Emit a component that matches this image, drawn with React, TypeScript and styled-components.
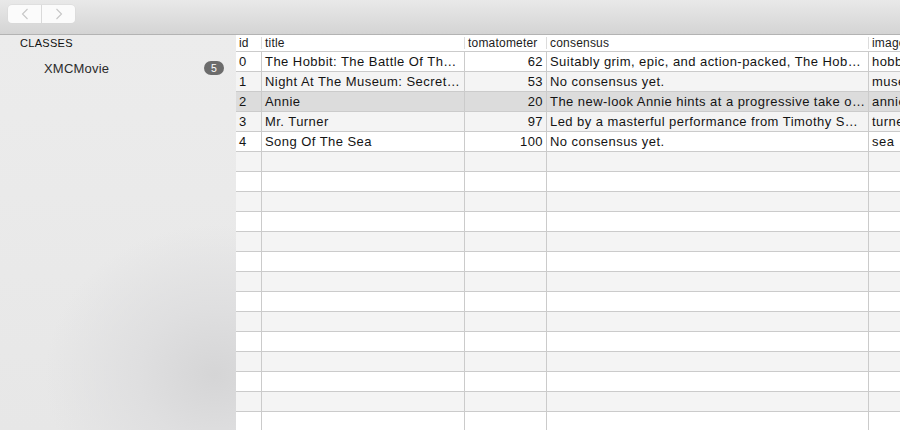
import React from "react";
import styled, { createGlobalStyle } from "styled-components";

const Global = createGlobalStyle`
  html, body { margin: 0; padding: 0; height: 430px; overflow: hidden; }
  body { font-family: "Liberation Sans", Arial, sans-serif; -webkit-font-smoothing: antialiased; }
  #root { height: 430px; }
`;

const Window = styled.div`
  display: flex;
  flex-direction: column;
  width: 900px;
  height: 430px;
  overflow: hidden;
`;

const Toolbar = styled.div`
  flex: none;
  height: 35px;
  box-sizing: border-box;
  border-bottom: 1px solid #b3b3b3;
  background: linear-gradient(#e9e9e9, #d4d4d4);
  display: flex;
  align-items: flex-start;
  padding: 5px 0 0 8px;
`;

const Segmented = styled.div`
  display: flex;
  height: 18px;
  border-radius: 4px;
  background: #fbfbfb;
  box-shadow: 0 0 0 0.5px #d8d8d8;
  overflow: hidden;
`;

const SegButton = styled.div<{ $divider?: boolean }>`
  width: 33px;
  height: 18px;
  display: flex;
  align-items: center;
  justify-content: center;
  border-right: ${(p) => (p.$divider ? "1px solid #dadada" : "none")};
`;

const Main = styled.div`
  flex: 1;
  display: flex;
  min-height: 0;
`;

const Sidebar = styled.div`
  width: 236px;
  flex: none;
  background: radial-gradient(ellipse 170px 150px at 215px 340px, #d5d5d6 0%, #dfdfe0 45%, rgba(233,233,233,0) 100%),
    linear-gradient(#ececec, #e7e7e7);
  display: flex;
  flex-direction: column;
  padding-top: 1px;
`;

const SectionTitle = styled.div`
  font-size: 11px;
  color: #111;
  padding-left: 20px;
  height: 14px;
  line-height: 14px;
  letter-spacing: 0.3px;
`;

const SidebarItem = styled.div`
  display: flex;
  align-items: center;
  justify-content: space-between;
  height: 22px;
  margin-top: 7px;
  padding: 0 12px 0 44px;
  font-size: 13px;
  letter-spacing: 0.2px;
  color: #2b2b2b;
`;

const Badge = styled.span`
  display: inline-flex;
  align-items: center;
  justify-content: center;
  width: 20px;
  height: 14px;
  border-radius: 7px;
  background: #6c6c6c;
  color: #fff;
  font-size: 10.5px;
`;

const Table = styled.div`
  flex: 1;
  background: #fff;
  display: flex;
  flex-direction: column;
  min-width: 0;
  overflow: hidden;
`;

const HeaderRow = styled.div`
  display: flex;
  height: 17px;
  flex: none;
  border-bottom: 1px solid #cbcbcb;
  box-sizing: border-box;
  background: #fff;
`;

const HeaderCell = styled.div<{ $w?: number }>`
  position: relative;
  width: ${(p) => (p.$w ? `${p.$w}px` : "auto")};
  flex: ${(p) => (p.$w ? "none" : "1")};
  box-sizing: border-box;
  font-size: 12px;
  letter-spacing: 0.2px;
  color: #1c1c1c;
  padding-left: 3px;
  line-height: 16px;
  white-space: nowrap;
  overflow: hidden;
  &::after {
    content: "";
    display: ${(p) => (p.$w ? "block" : "none")};
    position: absolute;
    right: 0;
    top: 2px;
    bottom: 2px;
    width: 1px;
    background: #dcdcdc;
  }
`;

const Row = styled.div<{ $bg: string }>`
  display: flex;
  height: 20px;
  flex: none;
  box-sizing: border-box;
  border-bottom: 1px solid #cbcbcb;
  background: ${(p) => p.$bg};
`;

const Cell = styled.div<{ $w?: number; $right?: boolean }>`
  width: ${(p) => (p.$w ? `${p.$w}px` : "auto")};
  flex: ${(p) => (p.$w ? "none" : "1")};
  box-sizing: border-box;
  border-right: ${(p) => (p.$w ? "1px solid #cbcbcb" : "none")};
  font-size: 13px;
  letter-spacing: 0.45px;
  color: #141414;
  line-height: 19px;
  padding: 0 3px;
  white-space: nowrap;
  overflow: hidden;
  text-overflow: ${(p) => (p.$w ? "ellipsis" : "clip")};
  text-align: ${(p) => (p.$right ? "right" : "left")};
`;

const cols = [
  { key: "id", w: 26 },
  { key: "title", w: 203 },
  { key: "tomatometer", w: 82, right: true },
  { key: "consensus", w: 322 },
  { key: "image" },
];

const data = [
  ["0", "The Hobbit: The Battle Of The Five Armies", "62", "Suitably grim, epic, and action-packed, The Hobbit: The Battle of the Five Armies", "hobbit"],
  ["1", "Night At The Museum: Secret Of The Tomb", "53", "No consensus yet.", "museum"],
  ["2", "Annie", "20", "The new-look Annie hints at a progressive take on the material", "annie"],
  ["3", "Mr. Turner", "97", "Led by a masterful performance from Timothy Spall", "turner"],
  ["4", "Song Of The Sea", "100", "No consensus yet.", "sea"],
];

const Chevron = ({ dir }: { dir: "l" | "r" }) => (
  <svg width="8" height="12" viewBox="0 0 8 12">
    <path
      d={dir === "l" ? "M6.5 1 L1.5 6 L6.5 11" : "M1.5 1 L6.5 6 L1.5 11"}
      fill="none"
      stroke="#c6c6c6"
      strokeWidth="1.1"
    />
  </svg>
);

export default function App() {
  const rows = Array.from({ length: 20 }, (_, i) => i);
  return (
    <Window>
      <Global />
      <Toolbar>
        <Segmented>
          <SegButton $divider>
            <Chevron dir="l" />
          </SegButton>
          <SegButton>
            <Chevron dir="r" />
          </SegButton>
        </Segmented>
      </Toolbar>
      <Main>
        <Sidebar>
          <SectionTitle>CLASSES</SectionTitle>
          <SidebarItem>
            <span>XMCMovie</span>
            <Badge>5</Badge>
          </SidebarItem>
        </Sidebar>
        <Table>
          <HeaderRow>
            {cols.map((c) => (
              <HeaderCell key={c.key} $w={c.w}>
                {c.key}
              </HeaderCell>
            ))}
          </HeaderRow>
          {rows.map((i) => {
            const d = data[i];
            const bg = i === 2 ? "#dcdcdc" : i % 2 === 1 ? "#f4f4f4" : "#ffffff";
            return (
              <Row key={i} $bg={bg}>
                {cols.map((c, j) => (
                  <Cell key={c.key} $w={c.w} $right={c.right}>
                    {d ? d[j] : ""}
                  </Cell>
                ))}
              </Row>
            );
          })}
        </Table>
      </Main>
    </Window>
  );
}
